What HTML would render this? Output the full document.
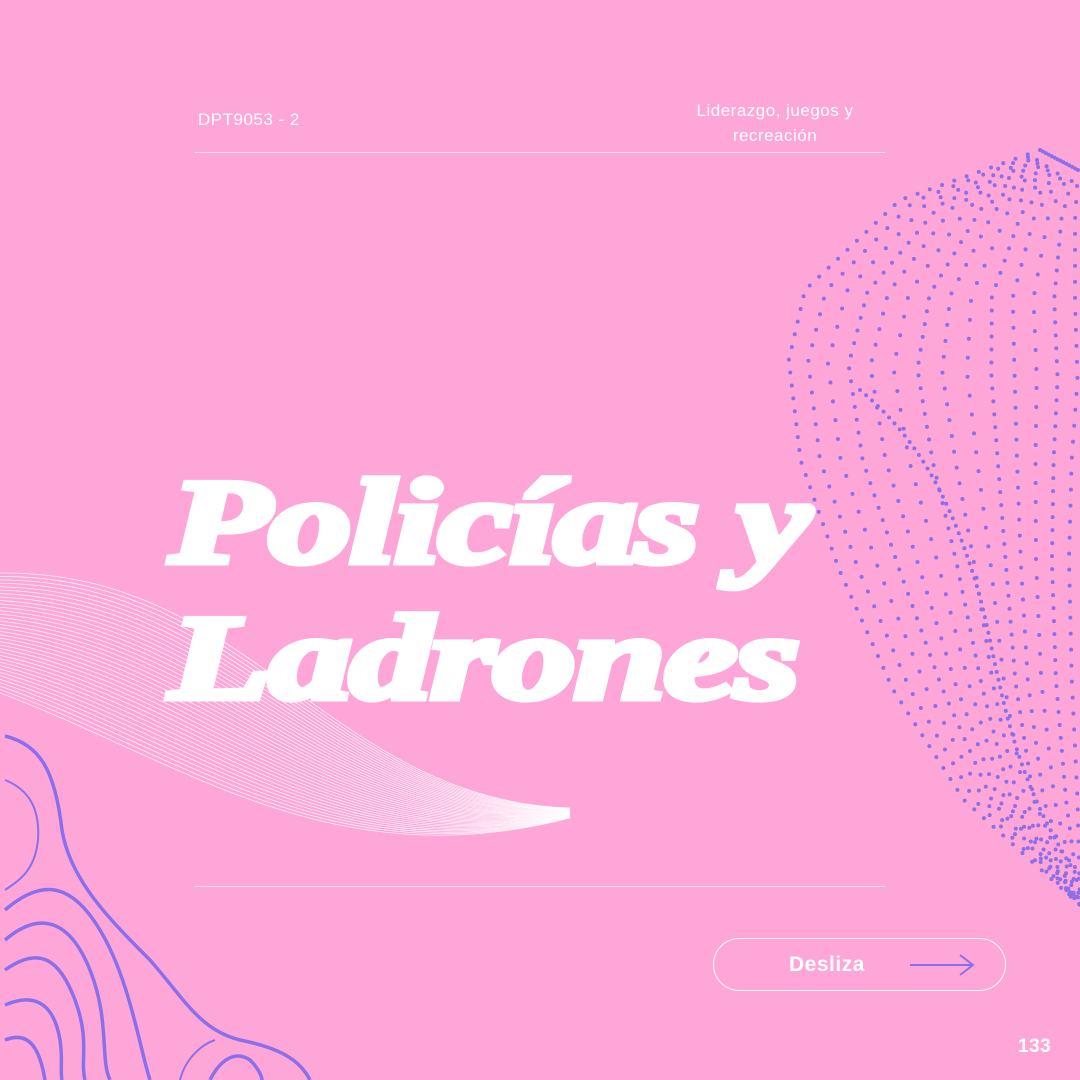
<!DOCTYPE html>
<html><head><meta charset="utf-8"><style>
html,body{margin:0;padding:0}
body{width:1080px;height:1080px;background:#FEA6D8;position:relative;overflow:hidden;font-family:"Liberation Sans",sans-serif;color:#fff}
.t{position:absolute;font-size:17px;letter-spacing:.5px}
.line{position:absolute;left:195px;width:690px;height:1px;background:#f3e3f3}
.title{position:absolute;left:170px;font-family:"Liberation Serif",serif;font-weight:bold;font-style:italic;font-size:120px;line-height:1;transform-origin:left top;transform:scaleX(1.37);letter-spacing:-1px;white-space:nowrap;-webkit-text-stroke:7px #fff}
.btn{position:absolute;left:713px;top:938px;width:293px;height:53px;border:1.5px solid #fff;border-radius:28px;box-sizing:border-box}
</style></head><body>
<svg id="s" width="1080" height="1080" style="position:absolute;left:0;top:0"></svg>
<div class="t" style="left:198px;top:110px">DPT9053 - 2</div>
<div class="t" style="left:670px;top:98px;width:210px;text-align:center;line-height:25px">Liderazgo, juegos y recreación</div>
<div class="line" style="top:152px"></div>
<div class="line" style="top:886px"></div>
<div class="title" style="top:462px">Policías y</div>
<div class="title" style="top:598px">Ladrones</div>
<div class="btn"></div>
<div class="t" style="left:789px;top:953px;font-size:21px;font-weight:bold">Desliza</div>
<svg width="70" height="30" style="position:absolute;left:908px;top:950px"><path d="M2 15H64M52 5L65 15L52 25" stroke="#8B6FE8" stroke-width="2" fill="none"/></svg>
<div class="t" style="left:1018px;top:1036px;font-size:19px;font-weight:bold">133</div>
<script>
var s=document.getElementById('s'),h='';
for(var i=0;i<36;i++){var a=i/35;
function m(p,q){return p+(q-p)*a;}
h+='<path d="M0 '+m(573,693)+' C'+m(250,180)+' '+m(570,760)+' '+m(330,330)+' '+m(800,880)+' 570 '+m(808,818)+'" stroke="#fff" stroke-width="0.8" fill="none" opacity="0.85"/>';}
var L=[[1040,150],[900,200],[805,290],[788,360],[805,460],[845,570],[895,690],[960,800],[1080,905]];
var R=[[1078,170],[1075,220],[1075,300],[1075,380],[1075,460],[1075,560],[1075,680],[1075,800],[1080,905]];
for(var i=0;i<14;i++){var a=i/13;var d='';
for(var k=0;k<L.length;k++){var x=L[k][0]+(R[k][0]-L[k][0])*a,y=L[k][1]+(R[k][1]-L[k][1])*a;
if(k>2&&k<8)x+=Math.sin(a*6+k)*6;
d+=(k?' L':'M')+x.toFixed(1)+' '+y.toFixed(1);}
h+='<path d="'+d+'" stroke="#8B6FE8" stroke-width="4" stroke-linecap="round" stroke-linejoin="round" stroke-dasharray="0 '+(13+(i%3)*3)+'" fill="none"/>';}
h+='<path d="M860 390 C920 440 950 500 975 580 S1000 760 1080 880" stroke="#8B6FE8" stroke-width="4" stroke-linecap="round" stroke-dasharray="0 8" fill="none"/>';
var P=['M5 736 C40 745 55 770 62 830 C70 880 110 920 150 960 C185 1000 200 1030 240 1040 C280 1048 300 1060 310 1080',
'M5 780 C30 790 40 810 38 840 C35 870 20 880 5 890',
'M5 910 C40 880 70 880 100 930 C130 980 140 1050 150 1080',
'M5 940 C40 910 70 920 90 970 C110 1020 100 1060 110 1080',
'M5 970 C40 945 60 960 75 1000 C90 1040 80 1060 85 1080',
'M5 1005 C40 990 55 1010 60 1040 C63 1060 60 1070 62 1080',
'M5 1040 C30 1030 40 1050 45 1080',
'M210 1080 C220 1060 235 1050 250 1060 C260 1070 262 1078 262 1080',
'M180 1080 C185 1060 200 1045 215 1040'];
P.forEach(function(d,i){h+='<path d="'+d+'" stroke="#8A6FEA" stroke-width="'+(i==1||i==8?2:3.5)+'" fill="none"/>';});
s.innerHTML=h;
</script>
</body></html>
